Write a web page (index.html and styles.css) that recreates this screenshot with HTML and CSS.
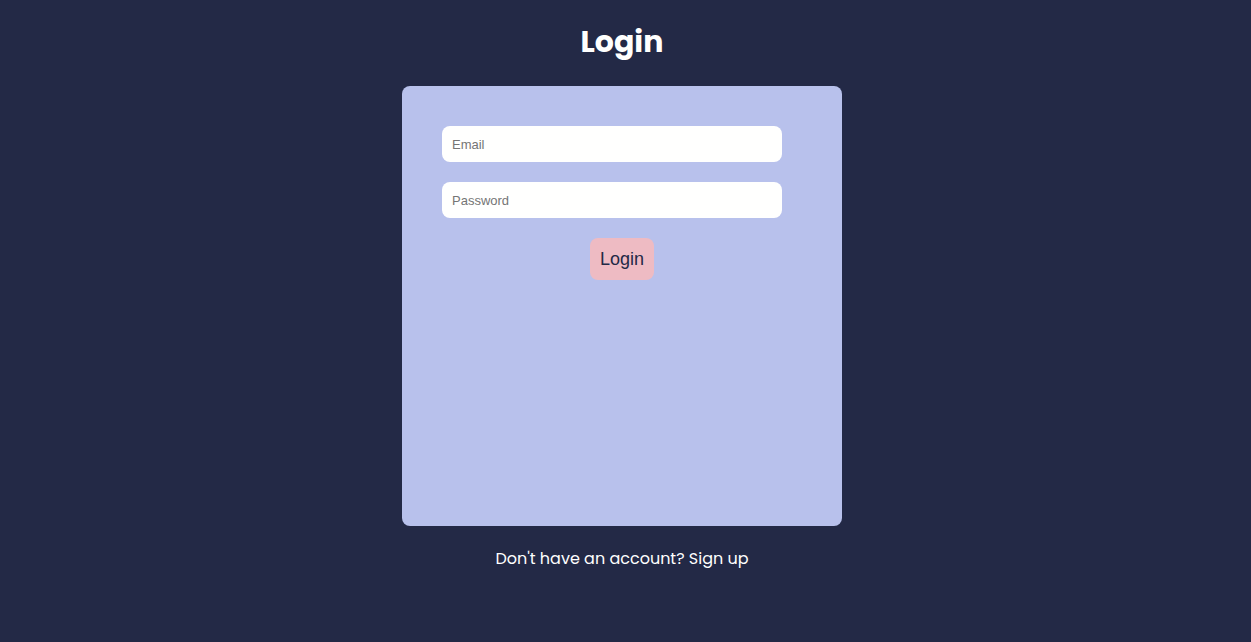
FILE: index.html
```html
<!DOCTYPE html>
<html>
<head>
<meta charset="utf-8">
<link rel="stylesheet" href="styles.css">
</head>
<body>
<main class="page">
  <h1 class="title">Login</h1>
  <form class="card">
    <input class="field" type="email" placeholder="Email">
    <input class="field" type="password" placeholder="Password">
    <button class="btn" type="button">Login</button>
  </form>
  <p class="footer">Don't have an account? Sign up</p>
</main>
</body>
</html>
```
FILE: styles.css
```css
html, body {
  margin: 0;
  padding: 0;
  background: #232946;
  height: 100%;
}
.page {
  display: flex;
  flex-direction: column;
  align-items: center;
  padding-top: 18px;
  padding-right: 7px;
  font-family: "Poppins", "Inter", "Noto Sans", sans-serif;
}
.title {
  margin: 0;
  height: 48px;
  line-height: 48px;
  font-size: 30px;
  font-weight: 700;
  color: #fffffe;
}
.card {
  margin-top: 20px;
  width: 440px;
  height: 440px;
  box-sizing: border-box;
  padding: 40px;
  background: #b8c1ec;
  border-radius: 8px;
  display: flex;
  flex-direction: column;
  align-items: flex-start;
  gap: 20px;
}
.field {
  width: 340px;
  height: 36px;
  box-sizing: border-box;
  border: none;
  border-radius: 8px;
  background: #fffffe;
  padding: 0 10px;
  font-family: "Liberation Sans", Arial, sans-serif;
  font-size: 13px;
  color: #232946;
  outline: none;
}
.field::placeholder {
  color: #757575;
}
.btn {
  align-self: center;
  height: 42px;
  width: 64px;
  border: none;
  border-radius: 8px;
  background: #eebbc3;
  color: #232946;
  font-family: "Liberation Sans", Arial, sans-serif;
  font-size: 18px;
  padding: 0;
}
.footer {
  margin: 21px 0 0;
  line-height: 24px;
  font-size: 16px;
  color: #fffffe;
  font-weight: 400;
}
```
